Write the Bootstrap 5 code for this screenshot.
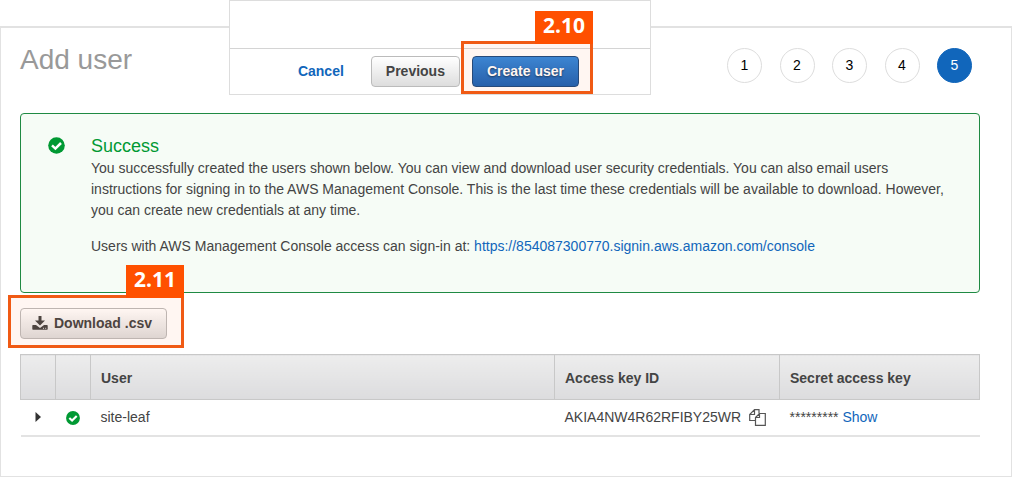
<!DOCTYPE html>
<html lang="en">
<head>
<meta charset="utf-8">
<meta name="viewport" content="width=device-width, initial-scale=1">
<title>Add user</title>
<link rel="stylesheet" href="https://cdn.jsdelivr.net/npm/bootstrap@5.3.0/dist/css/bootstrap.min.css">
<style>
  body { font-family: "Liberation Sans", Arial, sans-serif; font-size: 14px; line-height: 21px; color: #444; background: #fff; }
  a { color: #1166bb; text-decoration: none; }
  .wizard { margin-top: 26px; min-height: calc(100vh - 26px); border: 1px solid #e2e2e2; border-top-width: 2px; padding: 20px 31px 20px 19px; }
  .wizard-head { height: 65px; padding-right: 8px; }
  .wizard-title { font-size: 28px; line-height: 24px; color: #999; }
  .steps { width: 245px; }
  .step { width: 35px; height: 35px; border: 1px solid #ddd; color: #000; }
  .step.current { background: #1166bb; border-color: #1166bb; color: #fff; }
  .notice { background: #f6fcf6; border: 1px solid #1f8a43; border-radius: 4px; padding: 21px 26px 35px 27px; gap: 26px; }
  .notice-icon { margin-top: 2px; }
  .notice-title { font-size: 18px; line-height: 23px; color: #093; }
  .notice p { margin-bottom: 15px; }
  .tool-row { padding: 15px 0; }
  .action { font-weight: 700; line-height: 21px; height: 31px; padding: 4px 14px; color: #444; border: 1px solid #bbb; border-radius: 4px; background: linear-gradient(#fff, #ddd); }
  .action-main { color: #fff; border-color: #1c4a80; background: linear-gradient(#3388dd, #1c62b4); text-shadow: 0 1px 2px #0008; }
  .action-download { padding: 4px 14px 4px 11px; gap: 6px; }
  .keys { width: 100%; table-layout: fixed; border-bottom: 2px solid #e3e3e3; }
  .keys th { height: 45px; padding: 2px 10px 0; border: 1px solid #c8c8c8; background: linear-gradient(#ededed, #dcdcde); }
  .keys td { height: 36px; padding: 0 10px; }
  .col-mark { width: 35px; }
  .col-key { width: 225px; }
  .col-secret { width: 200px; }
  .expander { border: 0; background: none; }
  .footer-panel { top: 0; left: 229px; width: 422px; background: #fff; border: 1px solid #ddd; }
  .footer-top { height: 48px; border-bottom: 1px solid #d4d4d4; }
  .footer-bar { height: 45px; padding-right: 71px; gap: 12px; }
  .footer-bar a { margin-right: 15px; }
  .callout-box { border: 3px solid #f05a14; background: #ff50000d; pointer-events: none; }
  .callout-create { top: 41px; left: 461px; width: 132px; height: 53px; }
  .callout-download { top: -13px; left: -12px; width: 176px; height: 53px; }
  .callout-tag { right: -3px; bottom: 100%; width: 58px; height: 33px; background: #ff5000; color: #fff; font: 700 21px/29px "Open Sans", sans-serif; }
</style>
</head>
<body class="position-relative">
<main class="wizard">
  <header class="wizard-head d-flex justify-content-between align-items-start">
    <h1 class="wizard-title fw-normal mb-0">Add user</h1>
    <ol class="steps list-unstyled d-flex justify-content-between mb-0">
      <li class="step rounded-circle d-flex align-items-center justify-content-center">1</li>
      <li class="step rounded-circle d-flex align-items-center justify-content-center">2</li>
      <li class="step rounded-circle d-flex align-items-center justify-content-center">3</li>
      <li class="step rounded-circle d-flex align-items-center justify-content-center">4</li>
      <li class="step current rounded-circle d-flex align-items-center justify-content-center" aria-current="step">5</li>
    </ol>
  </header>

  <section class="notice d-flex align-items-start">
    <svg class="notice-icon flex-shrink-0" width="17" height="17" viewBox="0 0 17 17" aria-hidden="true"><circle cx="8.500" cy="8.500" r="8.300" fill="#093"/><path d="M4 8.400 7.400 11.600 13 6" fill="none" stroke="#fff" stroke-width="2.500"/></svg>
    <div>
      <h2 class="notice-title fw-normal mb-0">Success</h2>
      <p>You successfully created the users shown below. You can view and download user security credentials. You can also email users instructions for signing in to the AWS Management Console. This is the last time these credentials will be available to download. However, you can create new credentials at any time.</p>
      <p class="mb-0">Users with AWS Management Console access can sign-in at: <a href="#console">https://854087300770.signin.aws.amazon.com/console</a></p>
    </div>
  </section>

  <div class="tool-row">
    <div class="position-relative d-inline-block align-top">
      <button type="button" class="action action-download d-flex align-items-center">
        <svg width="16" height="15" viewBox="0 0 16 15" aria-hidden="true"><path d="M6.500 0h3v4.500H13L8 9.500 3 4.500h3.500zM1 9h3l4 3 4-3h3q.7 0 .7.700V13q0 .7-.7.700H1q-.7 0-.7-.7V9.700Q.3 9 1 9z" fill="#444"/><path d="M11 12.300h1M13.200 12.300h1" stroke="#ddd"/></svg>
        Download .csv
      </button>
      <div class="callout-box callout-download position-absolute"><span class="callout-tag position-absolute text-center">2.11</span></div>
    </div>
  </div>

  <table class="keys">
    <colgroup><col class="col-mark"><col class="col-mark"><col><col class="col-key"><col class="col-secret"></colgroup>
    <thead>
      <tr><th></th><th></th><th>User</th><th>Access key ID</th><th>Secret access key</th></tr>
    </thead>
    <tbody>
      <tr>
        <td class="p-0 text-center"><button type="button" class="expander p-0" aria-label="Expand site-leaf"><svg class="d-block" width="6" height="10" viewBox="0 0 6 10"><path d="M.500 0 6 5 .500 10z" fill="#333"/></svg></button></td>
        <td class="p-0 text-center"><svg width="14" height="14" viewBox="0 0 17 17" role="img" aria-label="Created"><circle cx="8.500" cy="8.500" r="8.400" fill="#093"/><path d="M4 8.400 7.400 11.600 13 6" fill="none" stroke="#fff" stroke-width="2.600"/></svg></td>
        <td>site-leaf</td>
        <td><div class="d-flex align-items-center justify-content-between pe-1">AKIA4NW4R62RFIBY25WR
          <button type="button" class="expander p-0" aria-label="Copy access key"><svg class="d-block" width="17" height="17" viewBox="0 0 17 17" fill="none" stroke="#555" stroke-width="1.200"><path d="M6.500 11.500H.700V5.500L5.500.700H10V4.500M5.500.700V5.500H.700"/><path d="M6.500 8.500 10.500 4.500H16.300V16.300H6.500zM10.500 4.500V8.500H6.500"/></svg></button></div></td>
        <td>********* <a href="#show">Show</a></td>
      </tr>
    </tbody>
  </table>
</main>

<section class="footer-panel position-absolute" aria-label="Review actions">
  <div class="footer-top"></div>
  <div class="footer-bar d-flex align-items-center justify-content-end">
    <a href="#cancel" class="fw-bold">Cancel</a>
    <button type="button" class="action">Previous</button>
    <button type="button" class="action action-main">Create user</button>
  </div>
</section>
<div class="callout-box callout-create position-absolute"><span class="callout-tag position-absolute text-center">2.10</span></div>
<script src="https://cdn.jsdelivr.net/npm/bootstrap@5.3.0/dist/js/bootstrap.bundle.min.js"></script>
</body>
</html>
